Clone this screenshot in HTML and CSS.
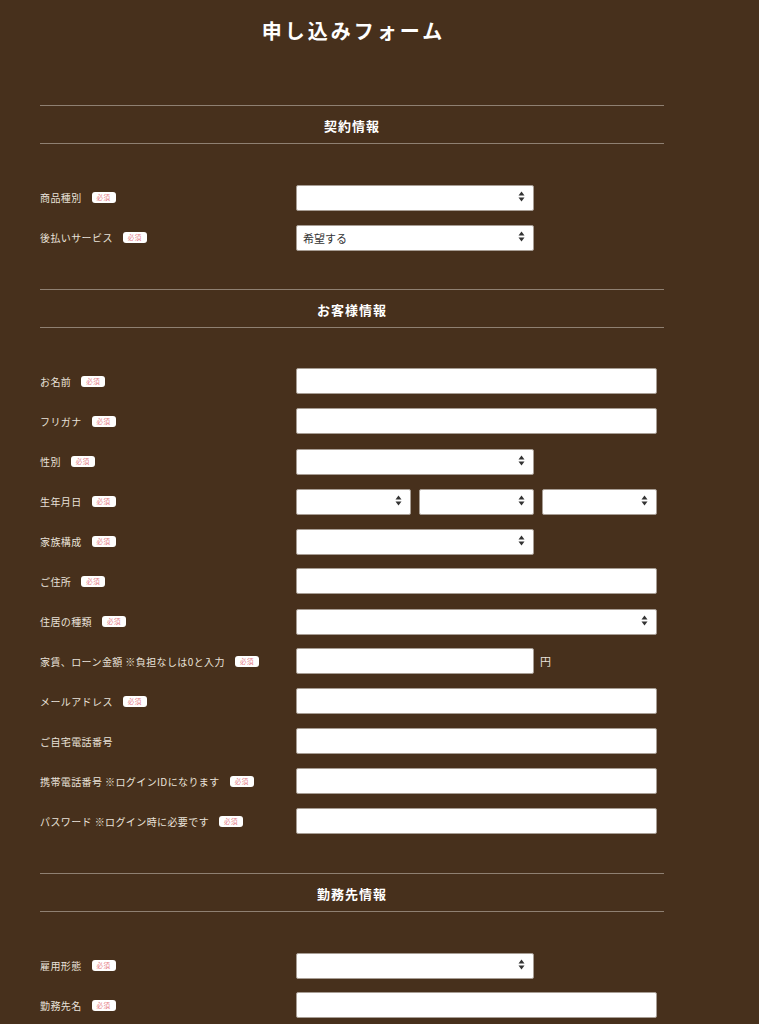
FILE: index.html
```html
<!DOCTYPE html>
<html lang="ja">
<head>
<meta charset="utf-8">
<title>申し込みフォーム</title>
<link rel="stylesheet" href="styles.css">
</head>
<body>
<div class="page">
  <h1 class="title">申し込みフォーム</h1>

  <section class="section">
    <h2 class="section-head">契約情報</h2>
    <div class="section-body">
      <div class="row">
        <div class="label"><span>商品種別</span><span class="req">必須</span></div>
        <div class="field"><div class="sel w-mid"><select></select><svg class="arr" viewBox="0 0 7 11"><path d="M0.5 4.5L3.5 0.5L6.5 4.5Z"/><path d="M0.5 6.5L6.5 6.5L3.5 10.5Z"/></svg></div></div>
      </div>
      <div class="row">
        <div class="label"><span>後払いサービス</span><span class="req">必須</span></div>
        <div class="field"><div class="sel w-mid"><select><option>希望する</option></select><svg class="arr" viewBox="0 0 7 11"><path d="M0.5 4.5L3.5 0.5L6.5 4.5Z"/><path d="M0.5 6.5L6.5 6.5L3.5 10.5Z"/></svg></div></div>
      </div>
    </div>
  </section>

  <section class="section">
    <h2 class="section-head">お客様情報</h2>
    <div class="section-body">
      <div class="row">
        <div class="label"><span>お名前</span><span class="req">必須</span></div>
        <div class="field"><input class="inp w-full" type="text"></div>
      </div>
      <div class="row">
        <div class="label"><span>フリガナ</span><span class="req">必須</span></div>
        <div class="field"><input class="inp w-full" type="text"></div>
      </div>
      <div class="row">
        <div class="label"><span>性別</span><span class="req">必須</span></div>
        <div class="field"><div class="sel w-mid"><select></select><svg class="arr" viewBox="0 0 7 11"><path d="M0.5 4.5L3.5 0.5L6.5 4.5Z"/><path d="M0.5 6.5L6.5 6.5L3.5 10.5Z"/></svg></div></div>
      </div>
      <div class="row">
        <div class="label"><span>生年月日</span><span class="req">必須</span></div>
        <div class="field dates">
          <div class="sel w-date"><select></select><svg class="arr" viewBox="0 0 7 11"><path d="M0.5 4.5L3.5 0.5L6.5 4.5Z"/><path d="M0.5 6.5L6.5 6.5L3.5 10.5Z"/></svg></div>
          <div class="sel w-date"><select></select><svg class="arr" viewBox="0 0 7 11"><path d="M0.5 4.5L3.5 0.5L6.5 4.5Z"/><path d="M0.5 6.5L6.5 6.5L3.5 10.5Z"/></svg></div>
          <div class="sel w-date"><select></select><svg class="arr" viewBox="0 0 7 11"><path d="M0.5 4.5L3.5 0.5L6.5 4.5Z"/><path d="M0.5 6.5L6.5 6.5L3.5 10.5Z"/></svg></div>
        </div>
      </div>
      <div class="row">
        <div class="label"><span>家族構成</span><span class="req">必須</span></div>
        <div class="field"><div class="sel w-mid"><select></select><svg class="arr" viewBox="0 0 7 11"><path d="M0.5 4.5L3.5 0.5L6.5 4.5Z"/><path d="M0.5 6.5L6.5 6.5L3.5 10.5Z"/></svg></div></div>
      </div>
      <div class="row">
        <div class="label"><span>ご住所</span><span class="req">必須</span></div>
        <div class="field"><input class="inp w-full" type="text"></div>
      </div>
      <div class="row">
        <div class="label"><span>住居の種類</span><span class="req">必須</span></div>
        <div class="field"><div class="sel w-full"><select></select><svg class="arr" viewBox="0 0 7 11"><path d="M0.5 4.5L3.5 0.5L6.5 4.5Z"/><path d="M0.5 6.5L6.5 6.5L3.5 10.5Z"/></svg></div></div>
      </div>
      <div class="row">
        <div class="label"><span>家賃、ローン金額 ※負担なしは0と入力</span><span class="req">必須</span></div>
        <div class="field price"><input class="inp w-mid" type="text"><span class="unit">円</span></div>
      </div>
      <div class="row">
        <div class="label"><span>メールアドレス</span><span class="req">必須</span></div>
        <div class="field"><input class="inp w-full" type="text"></div>
      </div>
      <div class="row">
        <div class="label"><span>ご自宅電話番号</span></div>
        <div class="field"><input class="inp w-full" type="text"></div>
      </div>
      <div class="row">
        <div class="label"><span>携帯電話番号 ※ログインIDになります</span><span class="req">必須</span></div>
        <div class="field"><input class="inp w-full" type="text"></div>
      </div>
      <div class="row">
        <div class="label"><span>パスワード ※ログイン時に必要です</span><span class="req">必須</span></div>
        <div class="field"><input class="inp w-full" type="password"></div>
      </div>
    </div>
  </section>

  <section class="section">
    <h2 class="section-head">勤務先情報</h2>
    <div class="section-body">
      <div class="row">
        <div class="label"><span>雇用形態</span><span class="req">必須</span></div>
        <div class="field"><div class="sel w-mid"><select></select><svg class="arr" viewBox="0 0 7 11"><path d="M0.5 4.5L3.5 0.5L6.5 4.5Z"/><path d="M0.5 6.5L6.5 6.5L3.5 10.5Z"/></svg></div></div>
      </div>
      <div class="row">
        <div class="label"><span>勤務先名</span><span class="req">必須</span></div>
        <div class="field"><input class="inp w-full" type="text"></div>
      </div>
    </div>
  </section>
</div>
</body>
</html>
```

FILE: styles.css
```css
html, body {
  margin: 0;
  padding: 0;
  background: #47301c;
}

body {
  font-family: "Noto Sans CJK JP", "Noto Sans", sans-serif;
  color: #e9e2da;
}

.page {
  width: 624px;
  margin-left: 40px;
}

.title {
  margin: 0;
  padding-top: 19px;
  height: 24px;
  line-height: 24px;
  font-size: 20px;
  font-weight: 700;
  letter-spacing: 3px;
  text-align: center;
  color: #ffffff;
  padding-left: 3px;
}

.section:first-of-type {
  margin-top: 62px;
}

.section-head {
  margin: 0;
  height: 37px;
  line-height: 39px;
  border-top: 1px solid #8f8072;
  border-bottom: 1px solid #8f8072;
  font-size: 13px;
  font-weight: 700;
  letter-spacing: 1px;
  text-align: center;
  color: #ffffff;
}

.section-body {
  padding: 40px 0 39px;
  display: flex;
  flex-direction: column;
  gap: 14px;
}

.row {
  display: grid;
  grid-template-columns: 256px 1fr;
  align-items: center;
  height: 26px;
}

.label {
  display: flex;
  align-items: center;
  font-size: 10px;
  letter-spacing: 0.4px;
  color: #e9e2da;
  white-space: nowrap;
}

.req {
  display: inline-flex;
  align-items: center;
  justify-content: center;
  width: 24px;
  height: 11px;
  margin-left: 10px;
  background: #ffffff;
  border-radius: 3px;
  color: #e57c86;
  font-size: 6.5px;
  letter-spacing: 0.5px;
  line-height: 1;
}

.field {
  display: flex;
  align-items: center;
}

.dates {
  gap: 8px;
}

.price {
  gap: 6px;
}

.unit {
  font-size: 11px;
  color: #e9e2da;
}

.w-full { width: 361px; }
.w-mid { width: 238px; }
.w-date { width: 115px; }

.inp {
  box-sizing: border-box;
  height: 26px;
  margin: 0;
  padding: 0 6px;
  background: #ffffff;
  border: 1px solid #a79d94;
  border-radius: 2px;
  font-family: inherit;
  font-size: 11px;
  color: #333333;
  outline: none;
}

.sel {
  position: relative;
  height: 26px;
}

.sel select {
  -webkit-appearance: none;
  appearance: none;
  box-sizing: border-box;
  width: 100%;
  height: 26px;
  margin: 0;
  padding: 0 20px 0 6px;
  background: #ffffff;
  border: 1px solid #a79d94;
  border-radius: 2px;
  font-family: inherit;
  font-size: 11px;
  color: #333333;
  outline: none;
}

.arr {
  position: absolute;
  right: 9px;
  top: 7px;
  width: 7px;
  height: 11px;
  fill: #333333;
  pointer-events: none;
}
```
